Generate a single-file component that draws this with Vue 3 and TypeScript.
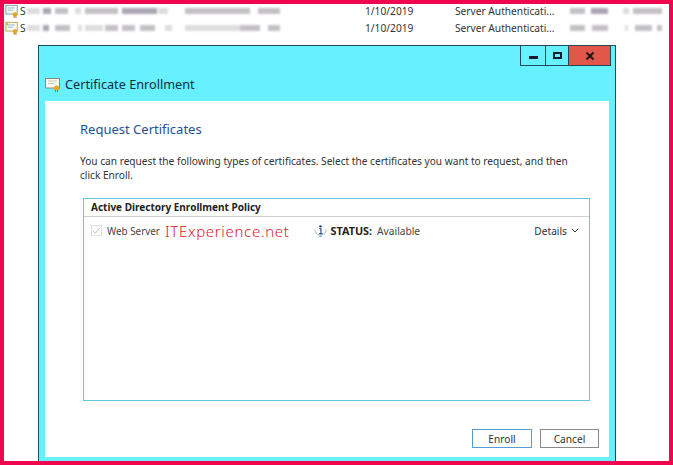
<script setup lang="ts">
type Smudge = { width: number; gap: number; tone: string };

const light = '#dedede';
const mid = '#c4c1c6';
const dark = '#aaa6b2';

const rows: { smudges: Smudge[]; tail: Smudge[]; warn: boolean }[] = [
  {
    warn: false,
    smudges: [
      { width: 13, gap: 1, tone: light },
      { width: 8, gap: 3, tone: dark },
      { width: 13, gap: 4, tone: mid },
      { width: 6, gap: 7, tone: light },
      { width: 33, gap: 4, tone: mid },
      { width: 35, gap: 4, tone: dark },
      { width: 10, gap: 1, tone: light },
      { width: 65, gap: 17, tone: mid },
      { width: 22, gap: 8, tone: mid },
    ],
    tail: [
      { width: 15, gap: 0, tone: mid },
      { width: 17, gap: 6, tone: dark },
      { width: 6, gap: 15, tone: light },
      { width: 29, gap: 4, tone: mid },
    ],
  },
  {
    warn: true,
    smudges: [
      { width: 13, gap: 1, tone: light },
      { width: 6, gap: 3, tone: dark },
      { width: 15, gap: 6, tone: mid },
      { width: 4, gap: 8, tone: light },
      { width: 18, gap: 3, tone: light },
      { width: 13, gap: 2, tone: mid },
      { width: 13, gap: 4, tone: mid },
      { width: 15, gap: 5, tone: mid },
      { width: 7, gap: 10, tone: light },
      { width: 55, gap: 13, tone: light },
      { width: 20, gap: 0, tone: mid },
      { width: 12, gap: 8, tone: mid },
    ],
    tail: [
      { width: 15, gap: 0, tone: mid },
      { width: 16, gap: 7, tone: mid },
      { width: 3, gap: 17, tone: light },
      { width: 17, gap: 7, tone: mid },
      { width: 5, gap: 5, tone: mid },
    ],
  },
];
</script>

<template>
  <div class="screen">
    <div class="list">
      <div v-for="(row, i) in rows" :key="i" class="list-row">
        <svg class="cert small" viewBox="0 0 16 16" width="14" height="14">
          <rect x="1" y="1.5" width="13" height="10" fill="#f4f8f2" :stroke="row.warn ? '#b9a24a' : '#6f9aa8'" />
          <path d="M3 4.5h8M3 7h6" stroke="#8fb4c0" fill="none" />
          <path v-if="row.warn" d="M2.5 1v4" stroke="#e8b820" stroke-width="2" />
          <circle cx="11.5" cy="12" r="2.6" fill="#e8a21c" />
          <path d="M10.5 14v2M12.5 14v2" stroke="#c9661a" />
        </svg>
        <span class="cut">S</span>
        <div class="smudges first">
          <i
            v-for="(s, j) in row.smudges"
            :key="j"
            :style="{ width: s.width + 'px', marginLeft: s.gap + 'px', background: s.tone }"
          ></i>
        </div>
        <span class="date">1/10/2019</span>
        <span class="purpose">Server Authenticati...</span>
        <div class="smudges">
          <i
            v-for="(s, j) in row.tail"
            :key="j"
            :style="{ width: s.width + 'px', marginLeft: s.gap + 'px', background: s.tone }"
          ></i>
        </div>
      </div>
    </div>

    <div class="window">
      <div class="caption">
        <div class="controls">
          <button class="ctl" aria-label="Minimize"><span class="min"></span></button>
          <button class="ctl narrow" aria-label="Maximize"><span class="max"></span></button>
          <button class="ctl close" aria-label="Close">
            <svg viewBox="0 0 10 8" width="10" height="8">
              <path d="M1.5 .5l7 7M8.5 .5l-7 7" stroke="#1c1410" stroke-width="2" fill="none" />
            </svg>
          </button>
        </div>
      </div>
      <div class="title-bar">
        <svg class="cert" viewBox="0 0 16 16" width="16" height="16">
          <rect x=".5" y="2.5" width="14" height="9.5" fill="#fbfaf3" stroke="#8d8a7c" />
          <path d="M3 5h9M3 7.5h6" stroke="#c9c6b4" fill="none" />
          <circle cx="11.5" cy="12" r="2.6" fill="#eda61d" />
          <path d="M10.5 14v2M12.5 14v2" stroke="#c9661a" />
        </svg>
        <span>Certificate Enrollment</span>
      </div>
      <div class="body">
        <h1>Request Certificates</h1>
        <p>
          You can request the following types of certificates. Select the certificates you want to request, and then
          click Enroll.
        </p>
        <div class="policy">
          <div class="policy-head">Active Directory Enrollment Policy</div>
          <div class="policy-row">
            <span class="check">
              <svg viewBox="0 0 9 9" width="9" height="9">
                <path d="M1 5l2.2 2.4L8 1.6" stroke="#b8bcc0" fill="none" />
              </svg>
            </span>
            <span class="name">Web Server</span>
            <span class="brand">ITExperience.net</span>
            <svg class="info" viewBox="0 0 14 14" width="13" height="14">
              <path d="M1 5.5a6 6 0 0 0 12 0" stroke="#b4c6df" stroke-width="1.2" fill="none" />
              <path d="M5 13.5l2-1.8 2 1.8" fill="#8ea8cf" />
              <circle cx="7" cy="2" r="1.3" fill="#1f3f86" />
              <path d="M5.6 4.6h1.9v5.2M5.4 10h4" stroke="#1f3f86" stroke-width="1.2" fill="none" />
            </svg>
            <strong>STATUS:</strong>
            <span class="state">Available</span>
            <span class="details">
              Details
              <svg viewBox="0 0 8 5" width="8" height="5">
                <path d="M.8 .8L4 4l3.2-3.2" stroke="#333" fill="none" />
              </svg>
            </span>
          </div>
        </div>
        <div class="actions">
          <button class="btn primary">Enroll</button>
          <button class="btn">Cancel</button>
        </div>
      </div>
    </div>
  </div>
</template>

<style>
html,
body {
  margin: 0;
  background: #fff;
}
</style>

<style scoped>
.screen {
  box-sizing: border-box;
  width: 673px;
  height: 465px;
  overflow: hidden;
  border: 4px solid #f0064f;
  background: #fff;
  font-family: 'Noto Sans', 'Open Sans', sans-serif;
  color: #333;
  font-size: 10.2px;
}
.list {
  height: 43px;
  margin-top: -2px;
}
.list-row {
  display: flex;
  align-items: center;
  height: 17px;
  padding-left: 1px;
}
.cert {
  flex: none;
}
.cut {
  margin-left: 1px;
  width: 6px;
}
.smudges {
  display: flex;
  align-items: center;
  filter: blur(1px);
}
.smudges.first {
  width: 339px;
}
.smudges i {
  display: block;
  height: 6px;
}
.date {
  width: 90px;
}
.purpose {
  width: 115px;
}
.window {
  box-sizing: border-box;
  width: 578px;
  height: 416px;
  margin-left: 34px;
  background: #67f0ff;
  border: 1px solid #1d4a58;
  border-bottom: 0;
  padding: 0 6px 4px;
  display: flex;
  flex-direction: column;
}
.caption {
  display: flex;
  justify-content: flex-end;
  height: 20px;
  margin-right: -2px;
}
.controls {
  display: flex;
  height: 19px;
  border: 1px solid #1d4a58;
  border-top: 0;
}
.ctl {
  width: 25px;
  padding: 0;
  border: 0;
  border-right: 1px solid #1d4a58;
  background: none;
  display: flex;
  align-items: center;
  justify-content: center;
}
.ctl.narrow {
  width: 23px;
}
.ctl.close {
  width: 41px;
  border-right: 0;
  background: #e2574a;
}
.min {
  width: 9px;
  height: 3px;
  margin-top: 4px;
  background: #10202a;
}
.max {
  box-sizing: border-box;
  width: 9px;
  height: 7px;
  border: 2px solid #10202a;
}
.title-bar {
  display: flex;
  align-items: center;
  gap: 4px;
  height: 35px;
  font-size: 12.7px;
  color: #10303a;
}
.body {
  flex: 1;
  box-sizing: border-box;
  background: #fff;
  padding: 19px 19px 9px 35px;
  display: flex;
  flex-direction: column;
}
h1 {
  margin: 0;
  font-size: 13px;
  font-weight: 400;
  line-height: 18px;
  color: #1f4f9c;
}
p {
  margin: 16px 0 0;
  max-width: 495px;
  font-size: 10.15px;
  line-height: 14px;
  color: #333;
}
.policy {
  margin: 16px 0 0 3px;
  height: 203px;
  box-sizing: border-box;
  border: 1px solid #63c6dc;
}
.policy-head {
  height: 17px;
  padding-left: 7px;
  font-size: 10px;
  font-weight: 700;
  line-height: 17px;
  color: #222;
  border-bottom: 1px solid #cfcfcf;
}
.policy-row {
  display: flex;
  align-items: center;
  height: 27px;
  padding-left: 7px;
}
.check {
  box-sizing: border-box;
  width: 11px;
  height: 11px;
  border: 1px solid #e0e0e0;
  display: flex;
  align-items: center;
  justify-content: center;
}
.name {
  margin-left: 5px;
  font-size: 9.9px;
  color: #444;
}
.brand {
  margin-left: 5px;
  font-size: 15px;
  font-weight: 300;
  color: #e0202a;
  letter-spacing: 0.68px;
}
.info {
  margin-left: 24px;
}
strong {
  margin-left: 4px;
  font-size: 10.8px;
  color: #222;
}
.state {
  margin-left: 5px;
  color: #444;
}
.details {
  margin-left: auto;
  margin-right: 10px;
  display: flex;
  align-items: center;
  gap: 4px;
  color: #333;
}
.actions {
  margin-top: auto;
  display: flex;
  justify-content: flex-end;
  gap: 8px;
  margin-right: -9px;
}
.btn {
  box-sizing: border-box;
  width: 59px;
  height: 19px;
  padding: 0;
  background: #fff;
  border: 1px solid #8a8a8a;
  font: inherit;
  color: #333;
}
.btn.primary {
  width: 60px;
  border-color: #5a9bd0;
}
</style>
